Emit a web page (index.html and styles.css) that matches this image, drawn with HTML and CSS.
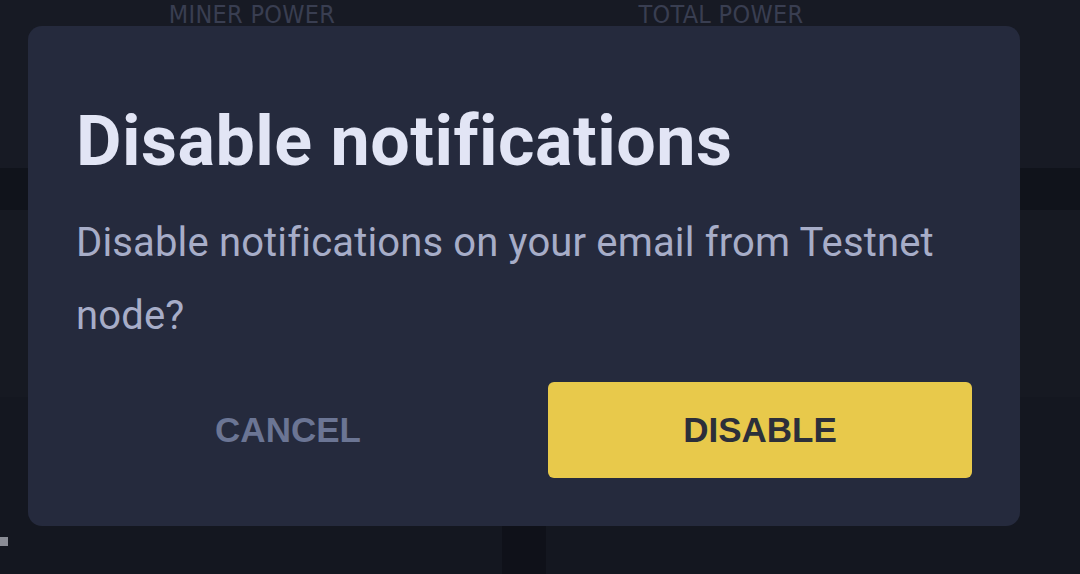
FILE: index.html
```html
<!DOCTYPE html>
<html lang="en">
<head>
<meta charset="utf-8">
<title>Disable notifications</title>
<link rel="stylesheet" href="styles.css">
</head>
<body>
<div class="page">
  <header class="header">
    <div class="stat stat-left">MINER POWER</div>
    <div class="stat stat-right">TOTAL POWER</div>
  </header>
  <div class="band"></div>
  <main class="content">
    <section class="card card-left">
      <div class="card-top"></div>
      <div class="card-bottom"><span class="tick"></span></div>
    </section>
    <div class="gutter"></div>
    <section class="card card-right">
      <div class="card-top"></div>
      <div class="card-bottom"></div>
    </section>
  </main>
</div>

<div class="modal" role="dialog" aria-labelledby="modal-title">
  <h1 class="modal-title" id="modal-title">Disable notifications</h1>
  <p class="modal-text">Disable notifications on your email from Testnet node?</p>
  <div class="modal-actions">
    <button class="btn btn-cancel" type="button">CANCEL</button>
    <button class="btn btn-disable" type="button">DISABLE</button>
  </div>
</div>
</body>
</html>
```

FILE: styles.css
```css
* { box-sizing: border-box; }

html, body {
  margin: 0;
  padding: 0;
  width: 1080px;
  height: 574px;
  overflow: hidden;
  background: #141720;
  font-family: Roboto, "Liberation Sans", sans-serif;
}

.page {
  display: flex;
  flex-direction: column;
  height: 574px;
}

.header {
  height: 168px;
  background: #171a24;
  display: flex;
  align-items: flex-start;
}

.stat {
  font-family: "DejaVu Sans", sans-serif;
  font-stretch: condensed;
  font-size: 25px;
  line-height: 30px;
  letter-spacing: 0.3px;
  color: #393e51;
  text-align: center;
}

.stat-left { width: 504px; }
.stat-right { width: 350px; margin-left: 42px; }

.band {
  height: 42px;
  background: #10131b;
}

.content {
  flex: 1;
  display: flex;
}

.card {
  display: flex;
  flex-direction: column;
}

.card-left { width: 502px; }
.card-right { flex: 1; }

.card-top {
  height: 187px;
  background: #161922;
}

.card-bottom {
  flex: 1;
  background: #141720;
  padding-top: 140px;
}

.gutter {
  width: 44px;
  background: #0f1119;
}

.tick {
  display: block;
  width: 8px;
  height: 9px;
  background: #8a8c95;
}

.modal {
  position: absolute;
  left: 28px;
  top: 26px;
  width: 992px;
  height: 500px;
  background: #252a3d;
  border-radius: 14px;
  padding: 48px;
  display: flex;
  flex-direction: column;
}

.modal-title {
  margin: 0;
  font-family: Roboto, sans-serif;
  font-weight: 700;
  font-size: 70px;
  line-height: 84px;
  letter-spacing: 0.5px;
  color: #e2e5f5;
  padding-top: 25px;
}

.modal-text {
  margin: 23px 0 0;
  font-family: Roboto, sans-serif;
  font-weight: 400;
  font-size: 40px;
  line-height: 73px;
  letter-spacing: 0.15px;
  color: #a7adc8;
}

.modal-actions {
  margin-top: auto;
  display: grid;
  grid-template-columns: 1fr 1fr;
  gap: 48px;
}

.btn {
  height: 96px;
  border: 0;
  border-radius: 6px;
  font-family: "Liberation Sans", Arial, sans-serif;
  font-weight: 700;
  font-size: 35px;
  cursor: pointer;
}

.btn-cancel {
  background: transparent;
  color: #6b7594;
}

.btn-disable {
  background: #e8c94b;
  color: #2c2f3a;
}
```
